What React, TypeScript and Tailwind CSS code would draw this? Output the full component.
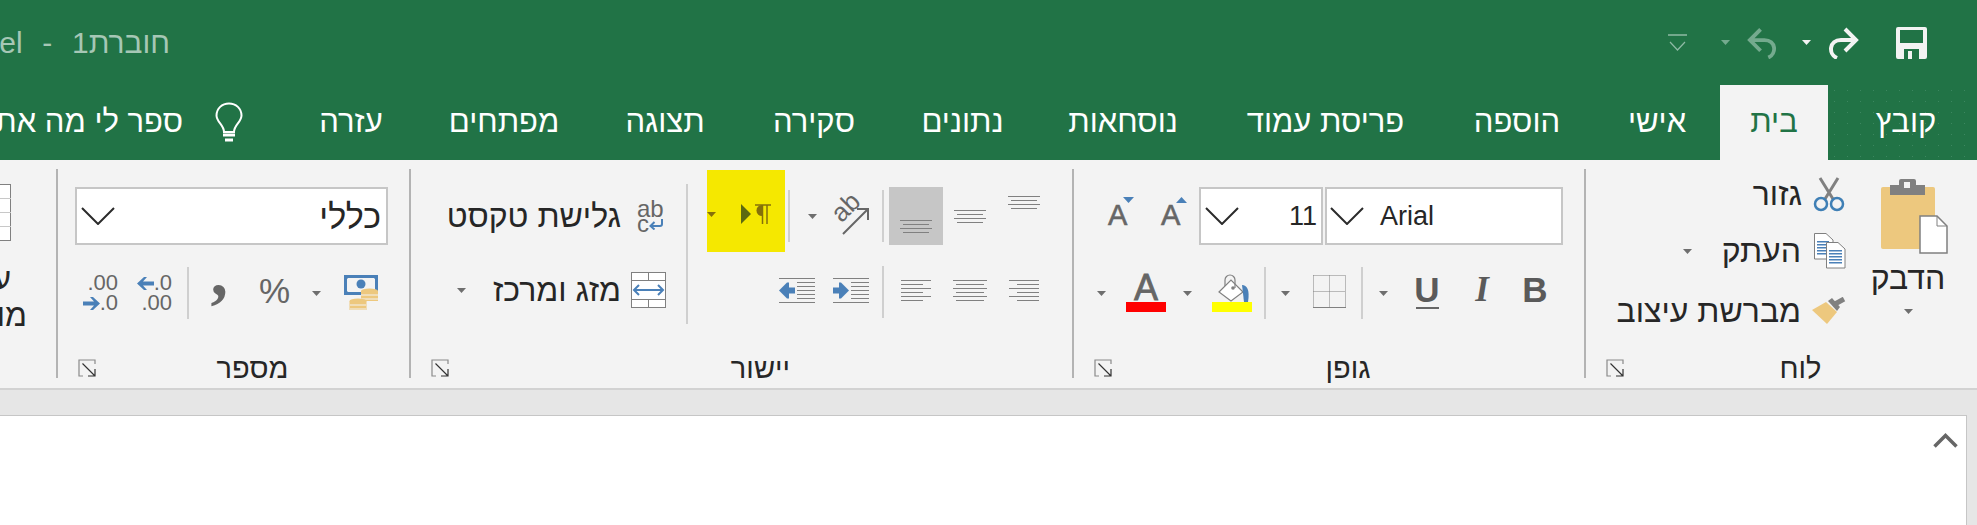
import React from 'react';

const tabs = [
  { label: 'בית', w: 'w-[108px]', active: true },
  { label: 'אישי', w: 'w-[126px]' },
  { label: 'הוספה', w: 'w-[154px]' },
  { label: 'פריסת עמוד', w: 'w-[229px]' },
  { label: 'נוסחאות', w: 'w-[176px]' },
  { label: 'נתונים', w: 'w-[145px]' },
  { label: 'סקירה', w: 'w-[152px]' },
  { label: 'תצוגה', w: 'w-[146px]' },
  { label: 'מפתחים', w: 'w-[176px]' },
  { label: 'עזרה', w: 'w-[130px]' },
];

function Caret({ className = '', fill = '#6e6e6e' }: { className?: string; fill?: string }) {
  return (
    <svg width="9" height="5" viewBox="0 0 9 5" className={`shrink-0 ${className}`}>
      <polygon points="0,0 9,0 4.5,5" fill={fill} />
    </svg>
  );
}

function Sep({ className = '' }: { className?: string }) {
  return <div className={`h-[52px] w-[2px] shrink-0 bg-[#cfcfcf] ${className}`} />;
}

function Launcher() {
  return (
    <svg width="18" height="18" viewBox="0 0 18 18" fill="none">
      <path d="M17 5V1H1V17H5" stroke="#8a8a8a" strokeWidth="1.2" />
      <path d="M4.5 4.5L16.5 16.5M10 17H17V10" stroke="#333" strokeWidth="1.2" />
    </svg>
  );
}

function Chevron() {
  return (
    <svg width="34" height="18" viewBox="0 0 34 18" fill="none" className="shrink-0">
      <path d="M1 1L17 17L33 1" stroke="#2b2b2b" strokeWidth="2" />
    </svg>
  );
}

function Lines({ rows, w, step = 4 }: { rows: [number, number][]; w: number; step?: number }) {
  const h = (rows.length - 1) * step + 1;
  return (
    <svg width={w} height={h} viewBox={`0 0 ${w} ${h}`} className="shrink-0">
      {rows.map(([x, len], i) => (
        <rect key={i} x={x} y={i * step} width={len} height="1" fill="#808080" />
      ))}
    </svg>
  );
}

function IndentIcon({ dir }: { dir: 'in' | 'out' }) {
  return (
    <svg width="36" height="25" viewBox="0 0 36 25" className="shrink-0">
      <rect x="0" y="0" width="36" height="1" fill="#808080" />
      <rect x="0" y="24" width="36" height="1" fill="#808080" />
      {[4, 8, 12, 16, 20].map(y => (
        <rect key={y} x="18" y={y} width="18" height="1" fill="#808080" />
      ))}
      {dir === 'out' ? (
        <polygon points="0,12.5 8,4.5 10,4.5 10,9.5 16,9.5 16,15.5 10,15.5 10,20.5 8,20.5" fill="#4a80b8" />
      ) : (
        <polygon points="16,12.5 8,4.5 6,4.5 6,9.5 0,9.5 0,15.5 6,15.5 6,20.5 8,20.5" fill="#4a80b8" />
      )}
    </svg>
  );
}

function Group({
  label,
  className,
  children,
}: {
  label: string;
  className: string;
  children: React.ReactNode;
}) {
  return (
    <section className={`flex h-[209px] shrink-0 flex-col border-l-2 border-[#b3b3b3] ${className}`}>
      <div className="flex-1">{children}</div>
      <div className="flex h-[20px] items-center">
        <div className="flex-1 text-center text-[29px] leading-none text-[#262626]">{label}</div>
        <div className="w-[38px] pl-[8px]">
          <Launcher />
        </div>
      </div>
    </section>
  );
}

function TitleBar() {
  return (
    <header className="flex h-[85px] items-center justify-between bg-[#217346]">
      <div className="flex items-center pr-[50px]">
        <svg width="31" height="32" viewBox="0 0 31 32" className="shrink-0">
          <path
            fillRule="evenodd"
            d="M2 0H29a2 2 0 0 1 2 2V30a2 2 0 0 1-2 2H2a2 2 0 0 1-2-2V2a2 2 0 0 1 2-2ZM4 3V16H27V3ZM8 22V32H23V22ZM12 24H16V32H12Z"
            fill="#f3f3f3"
          />
        </svg>
        <svg width="32" height="32" viewBox="0 0 32 32" fill="none" className="ms-[37px] shrink-0">
          <path d="M10 31C1 27 2 13 14 13H29M18 2L29 13L18 24" stroke="#f3f3f3" strokeWidth="4" />
        </svg>
        <Caret className="ms-[16px]" fill="#f3f3f3" />
        <svg width="31" height="32" viewBox="0 0 32 32" fill="none" className="ms-[24px] shrink-0">
          <path d="M22 31C31 27 30 13 18 13H3M14 2L3 13L14 24" stroke="#74aa8e" strokeWidth="4" />
        </svg>
        <Caret className="ms-[17px]" fill="#74aa8e" />
        <svg width="19" height="18" viewBox="0 0 19 18" fill="none" className="ms-[34px] shrink-0">
          <path d="M0 1H19" stroke="#8fbaa5" strokeWidth="1.5" />
          <path d="M2 8L9.5 16L17 8" stroke="#8fbaa5" strokeWidth="1.2" />
        </svg>
      </div>
      <div className="w-[170px] shrink-0 whitespace-nowrap text-[30px] text-[#a6c7b5]">
        חוברת1{'\u00A0\u00A0'}<span className="mx-[3px]">-</span>{'\u00A0\u00A0'}Excel
      </div>
    </header>
  );
}

function TabRow() {
  return (
    <nav className="flex h-[75px] items-stretch whitespace-nowrap bg-[#217346] text-[31px] text-white">
      <div className="flex w-[149px] shrink-0 items-center justify-center bg-[radial-gradient(circle,#3c8760_0.7px,transparent_1px)] bg-[length:13px_11px] pl-[7px]">
        קובץ
      </div>
      {tabs.map(t => (
        <div
          key={t.label}
          className={`flex shrink-0 items-center justify-center ${t.w} ${t.active ? 'bg-[#f3f3f3] text-[#217346]' : ''}`}
        >
          {t.label}
        </div>
      ))}
      <div className="flex shrink-0 items-center">
        <svg width="28" height="40" viewBox="0 0 28 40" fill="none" className="ms-[43px] mt-[-2px]">
          <path
            d="M9 30C9 23 1.500 20 1.500 13.500C1.500 6.500 7 1.500 14 1.500C21 1.500 26.500 6.500 26.500 13.500C26.500 20 19 23 19 30Z"
            stroke="white"
            strokeWidth="2"
          />
          <path d="M8 33H20M10 38H18" stroke="white" strokeWidth="3" />
        </svg>
        <span className="ms-[32px]">ספר לי מה אתה רוצה לעשות</span>
      </div>
    </nav>
  );
}

function Clipboard() {
  return (
    <Group label="לוח" className="w-[393px]">
      <div className="flex pr-[19px]">
        <div className="flex w-[100px] shrink-0 flex-col items-center">
          <svg width="80" height="75" viewBox="0 0 80 75" className="mt-[10px]">
            <rect x="13" y="8" width="54" height="62" rx="2" fill="#edc87e" />
            <path d="M22 6H31V2a2 2 0 0 1 2-2H46a2 2 0 0 1 2 2V6H57V16H22Z" fill="#808080" />
            <rect x="36" y="3" width="6" height="6" fill="#f3f3f3" />
            <path d="M52 37H69L79 47V74H52Z" fill="white" stroke="#808080" strokeWidth="1.5" />
            <path d="M69 37V47H79" fill="none" stroke="#808080" strokeWidth="1" />
          </svg>
          <div className="mt-[8px] text-[32px] leading-[32px] text-[#262626]">הדבק</div>
          <Caret className="mt-[15px]" />
        </div>
        <div className="flex flex-col text-[32px] text-[#262626]">
          <div className="flex h-[50px] items-center whitespace-nowrap">
            <svg width="34" height="35" viewBox="0 0 34 35" fill="none" className="ms-[12px] shrink-0">
              <path d="M8 1L21 22M26 1L13 22" stroke="#808080" strokeWidth="3" />
              <circle cx="9" cy="27" r="6" stroke="#3f7fb5" strokeWidth="2.5" />
              <circle cx="25" cy="27" r="6" stroke="#3f7fb5" strokeWidth="2.5" />
            </svg>
            <span className="ms-[10px]">גזור</span>
          </div>
          <div className="mt-[7px] flex h-[50px] items-center whitespace-nowrap">
            <svg width="34" height="36" viewBox="0 0 34 36" className="ms-[12px] shrink-0">
              <path d="M2.500 .5H14L21 7V26H2.500Z" fill="white" stroke="#808080" />
              {[8, 11, 14, 17, 20].map(y => (
                <rect key={y} x="5" y={y} width="12" height="1.500" fill="#4a80b8" />
              ))}
              <path d="M14.500 9.500H26L33 16V35H14.500Z" fill="white" stroke="#808080" />
              {[17, 20, 23, 26, 29].map(y => (
                <rect key={y} x="17" y={y} width="13" height="1.500" fill="#4a80b8" />
              ))}
            </svg>
            <span className="ms-[11px]">העתק</span>
            <Caret className="ms-[30px]" />
          </div>
          <div className="mt-[10px] flex h-[50px] items-center whitespace-nowrap">
            <svg width="34" height="28" viewBox="0 0 34 28" className="ms-[12px] shrink-0">
              <polygon points="0,13 14,5 25,15 15,27" fill="#edc87e" />
              <polygon points="16,4 20,1 28,10 25,14" fill="#808080" />
              <path d="M23 7L32 2" stroke="#808080" strokeWidth="5" />
            </svg>
            <span className="ms-[11px]">מברשת עיצוב</span>
          </div>
        </div>
      </div>
    </Group>
  );
}

function GrowA({ mark, up, className }: { mark: string; up: boolean; className: string }) {
  return (
    <div className={`relative h-[34px] w-[26px] shrink-0 ${className}`}>
      <div className="absolute bottom-[1px] left-0 text-[29px] leading-[34px] text-[#666] [-webkit-text-stroke:0.6px_#666]">A</div>
      <svg width="11" height="6" viewBox="0 0 11 6" className={`absolute top-[-2px] ${mark}`}>
        <polygon points={up ? '0,6 11,6 5.500,0' : '0,0 11,0 5.500,6'} fill="#4a80b8" />
      </svg>
    </div>
  );
}

function Font() {
  return (
    <Group label="גופן" className="w-[512px]">
      <div className="flex h-[58px] mt-[18px] items-center pr-[21px]">
        <div dir="ltr" className="flex h-[58px] w-[238px] shrink-0 items-center gap-[16px] border-2 border-[#c6c6c6] bg-white pl-[3px] text-[27px] text-[#262626]">
          <Chevron />
          <span>Arial</span>
        </div>
        <div dir="ltr" className="ml-0 mr-[2px] flex h-[58px] w-[124px] shrink-0 items-center justify-between border-2 border-[#c6c6c6] bg-white px-[4px] text-[27px] text-[#262626]">
          <Chevron />
          <span>11</span>
        </div>
        <GrowA className="ms-[12px]" mark="right-0" up />
        <GrowA className="ms-[27px]" mark="right-0" up={false} />
      </div>
      <div className="mt-[19px] flex h-[58px] items-center pr-[34px] text-[#5a5a5a]">
        <div className="mb-[7px] w-[30px] shrink-0 text-center text-[35px] font-bold leading-none">B</div>
        <div className="mb-[7px] ms-[23px] w-[30px] shrink-0 text-center font-['Liberation_Serif',serif] text-[35px] font-bold italic leading-none">I</div>
        <div className="mb-[3px] ms-[25px] flex w-[30px] shrink-0 flex-col items-center">
          <div className="text-[35px] font-bold leading-[30px]">U</div>
          <div className="mt-[2px] h-[2px] w-[23px] bg-[#666]" />
        </div>
        <Caret className="ms-[24px]" />
        <Sep className="ms-[16px]" />
        <svg width="33" height="33" viewBox="0 0 33 33" fill="none" className="mb-[3px] ms-[15px] shrink-0">
          <path d="M.5 .5H32.500V32M.5 .5V32M16.500 .5V32M.5 16.500H32.500" stroke="#808080" strokeDasharray="1 1" />
          <path d="M0 32.500H33" stroke="#808080" />
        </svg>
        <Caret className="ms-[23px]" />
        <Sep className="ms-[15px]" />
        <svg width="40" height="38" viewBox="0 0 40 38" fill="none" className="ms-[12px] shrink-0">
          <polygon points="7,18 19,6 31,18 19,27" fill="white" stroke="#808080" strokeWidth="1.200" />
          <path d="M13 12V6a5 5 0 0 1 10 0V14" stroke="#808080" strokeWidth="1.200" />
          <circle cx="21" cy="14" r="1.800" fill="#808080" />
          <path d="M30 11C35 11 38 16 36 28H32Z" fill="#4a80b8" />
          <rect x="0" y="28" width="40" height="10" fill="#ffff00" />
        </svg>
        <Caret className="ms-[20px]" />
        <div className="ms-[17px] flex w-[40px] shrink-0 flex-col items-center">
          <div className="text-[36px] leading-[28px] text-[#666] [-webkit-text-stroke:0.8px_#666]">A</div>
          <div className="h-[10px] w-[40px] bg-[#ff0000]" />
        </div>
        <Caret className="ms-[20px]" />
      </div>
    </Group>
  );
}

function Alignment() {
  const full = (w: number, s: number, n: number): [number, number][] =>
    Array.from({ length: n }, (_, i) => (i % 2 === 0 ? [0, w] : [s, w - 2 * s]) as [number, number]);
  return (
    <Group label="יישור" className="w-[663px]">
      <div className="flex">
        <div className="flex flex-col">
          <div className="mt-[18px] flex h-[58px] items-center pr-[21px]">
            <div className="flex h-[58px] w-[54px] shrink-0 items-start justify-center pt-[9px]">
              <Lines w={32} rows={full(32, 3, 4)} />
            </div>
            <div className="flex h-[58px] w-[54px] shrink-0 items-center justify-center">
              <Lines w={32} rows={full(32, 3, 4)} />
            </div>
            <div className="flex h-[58px] w-[54px] shrink-0 items-end justify-center bg-[#c6c6c6] pb-[12px]">
              <Lines w={32} rows={full(32, 3, 4)} />
            </div>
            <Sep className="ms-[5px]" />
            <div className="relative ms-[13px] h-[37px] w-[37px] shrink-0">
              <div className="absolute left-[-1px] top-[-3px] -rotate-45 text-[26px] leading-[24px] text-[#666]">ab</div>
              <svg width="37" height="37" viewBox="0 0 37 37" fill="none" className="absolute inset-0">
                <path d="M11 36L36 11M25 11H36V22" stroke="#666" strokeWidth="2" />
              </svg>
            </div>
            <Caret className="ms-[15px]" />
            <Sep className="ms-[18px]" />
            <div className="ms-[3px] -mt-[17px] flex h-[82px] w-[78px] shrink-0 items-center self-start bg-[#f5e800] pt-[6px]">
              <svg width="16" height="20" viewBox="0 0 16 20" className="ms-[14px] shrink-0">
                <path d="M0 1H16M7.500 1V20M12 1V20" stroke="#85700a" strokeWidth="1.500" fill="none" />
                <path d="M7 1A5.500 5.500 0 0 0 7 12Z" fill="#85700a" />
              </svg>
              <svg width="10" height="20" viewBox="0 0 10 20" className="ms-[4px] shrink-0">
                <polygon points="0,0 10,10 0,20" fill="#5c6a10" />
              </svg>
              <Caret className="ms-[25px]" fill="#85700a" />
            </div>
          </div>
          <div className="mt-[19px] flex h-[58px] items-center pb-[6px] pr-[21px]">
            <div className="flex w-[54px] shrink-0 justify-center">
              <Lines w={30} rows={[[0, 30], [8, 22], [0, 30], [8, 22], [0, 30], [8, 22]]} />
            </div>
            <div className="flex w-[54px] shrink-0 justify-center">
              <Lines w={34} rows={full(34, 3, 6)} />
            </div>
            <div className="flex w-[54px] shrink-0 justify-center">
              <Lines w={30} rows={[[0, 30], [0, 22], [0, 30], [0, 22], [0, 30], [0, 22]]} />
            </div>
            <Sep className="ms-[5px] mt-[4px]" />
            <div className="ms-[13px]">
              <IndentIcon dir="in" />
            </div>
            <div className="ms-[18px]">
              <IndentIcon dir="out" />
            </div>
          </div>
        </div>
        <div className="ms-[19px] mt-[15px] h-[140px] w-[2px] shrink-0 bg-[#cfcfcf]" />
        <div className="flex flex-col whitespace-nowrap text-[32px] text-[#262626]">
          <div className="mt-[18px] flex h-[58px] items-center">
            <div dir="ltr" className="mr-[23px] w-[26px] shrink-0 text-[#666]">
              <div className="text-[24px] leading-[15px]">ab</div>
              <div className="flex items-end text-[24px] leading-[15px]">
                c
                <svg width="14" height="11" viewBox="0 0 14 11" fill="none" className="mb-[1px]">
                  <path d="M13 0V5a2 2 0 0 1-2 2H2M5.500 3L1.500 7L5.500 10.500" stroke="#4a80b8" strokeWidth="2" />
                </svg>
              </div>
            </div>
            <span className="ms-[16px]">גלישת טקסט</span>
          </div>
          <div className="mt-[19px] flex h-[58px] items-center pb-[6px]">
            <svg width="35" height="36" viewBox="0 0 35 36" fill="none" className="ms-[20px] shrink-0">
              <rect x=".5" y=".5" width="34" height="35" fill="white" stroke="#808080" />
              <path d="M0 8.500H35M0 27.500H35M17.500 0V8M17.500 28V36" stroke="#808080" />
              <path d="M3 18H32M8 13L3 18L8 23M27 13L32 18L27 23" stroke="#4a80b8" strokeWidth="2" />
            </svg>
            <span className="ms-[10px]">מזג ומרכז</span>
            <Caret className="ms-[27px]" />
          </div>
        </div>
      </div>
    </Group>
  );
}

function Decimal({ top, bottom }: { top: React.ReactNode; bottom: React.ReactNode }) {
  return (
    <div dir="ltr" className="flex w-[35px] shrink-0 flex-col items-end text-[22px] leading-[20px] text-[#666]">
      <div className="flex items-center">{top}</div>
      <div className="flex items-center">{bottom}</div>
    </div>
  );
}

function Number_() {
  const left = (
    <svg width="17" height="13" viewBox="0 0 17 13">
      <polygon points="0,6.500 7,0 10,0 6,4.500 17,4.500 17,8.500 6,8.500 10,13 7,13" fill="#4a80b8" />
    </svg>
  );
  const right = (
    <svg width="17" height="13" viewBox="0 0 17 13">
      <polygon points="17,6.500 10,0 7,0 11,4.500 0,4.500 0,8.500 11,8.500 7,13 10,13" fill="#4a80b8" />
    </svg>
  );
  return (
    <Group label="מספר" className="w-[353px]">
      <div className="mt-[18px] flex h-[58px] items-center pr-[21px]">
        <div className="flex h-[58px] w-[313px] items-center justify-between border-2 border-[#c6c6c6] bg-white pl-[4px] pr-[5px] text-[34px] text-[#262626]">
          <span>כללי</span>
          <Chevron />
        </div>
      </div>
      <div className="mt-[19px] flex h-[58px] items-center pr-[31px]">
        <svg width="34" height="37" viewBox="0 0 34 37" className="shrink-0">
          <path d="M0 0H34V20H0Z" fill="#4a80b8" />
          <path d="M3 3H31V17H3Z" fill="#f3f3f3" />
          <path d="M0 0H7L0 7ZM34 0H27L34 7ZM0 20H7L0 13Z" fill="#4a80b8" />
          <circle cx="17" cy="9" r="4.500" fill="#4a80b8" />
          <ellipse cx="25.500" cy="16" rx="8.500" ry="2.500" fill="#edc87e" />
          <rect x="17" y="16" width="17" height="10" fill="#edc87e" />
          <path d="M17 20H34M17 24H34" stroke="#f3f3f3" />
          <ellipse cx="14" cy="26" rx="8.500" ry="2.500" fill="#edc87e" />
          <rect x="5.500" y="26" width="17" height="9" fill="#edc87e" />
          <path d="M6 30H22M6 34H22" stroke="#f3f3f3" />
        </svg>
        <Caret className="ms-[23px]" />
        <div className="mb-[5px] ms-[22px] w-[31px] shrink-0 text-center text-[35px] leading-none text-[#666]">%</div>
        <div className="mb-[28px] ms-[31px] h-[40px] w-[15px] shrink-0 text-center font-['Liberation_Serif',serif] text-[70px] font-bold leading-[26px] text-[#666]">,</div>
        <Sep className="ms-[24px]" />
        <div className="ms-[15px]">
          <Decimal top={<>{left}.0</>} bottom=".00" />
        </div>
        <div className="ms-[19px]">
          <Decimal top=".00" bottom={<>{right}.0</>} />
        </div>
      </div>
    </Group>
  );
}

function Conditional() {
  return (
    <section className="h-[209px] w-[56px] shrink-0 whitespace-nowrap text-[32px] leading-none text-[#262626]">
      <svg width="56" height="57" viewBox="0 0 56 57" fill="none" className="ms-[45px] mt-[15px] shrink-0">
        <rect x=".5" y=".5" width="55" height="56" fill="white" stroke="#808080" />
        <path d="M0 14.500H56M0 28.500H56M0 42.500H56" stroke="#c8c8c8" />
      </svg>
      <div className="ms-[45px] mt-[22px]">עיצוב</div>
      <div className="ms-[29px] mt-[4px]">מותנה</div>
    </section>
  );
}

export default function App() {
  return (
    <div
      dir="rtl"
      className="flex h-[525px] w-[1977px] flex-col overflow-hidden bg-[#e6e6e6] font-['Liberation_Sans','Noto_Sans',sans-serif]"
    >
      <TitleBar />
      <TabRow />
      <div className="flex h-[228px] shrink-0 bg-[#f3f3f3] pt-[9px]">
        <Clipboard />
        <Font />
        <Alignment />
        <Number_ />
        <Conditional />
      </div>
      <div className="flex flex-1 flex-col border-t-2 border-[#d2d2d2] pt-[25px]">
        <div className="ms-[10px] flex-1 border-r border-t border-[#c6c6c6] bg-white pr-[8px] pt-[17px]">
          <svg width="25" height="15" viewBox="0 0 25 15" fill="none">
            <path d="M1.500 13.500L12.500 2.500L23.500 13.500" stroke="#666" strokeWidth="3.500" />
          </svg>
        </div>
      </div>
    </div>
  );
}
